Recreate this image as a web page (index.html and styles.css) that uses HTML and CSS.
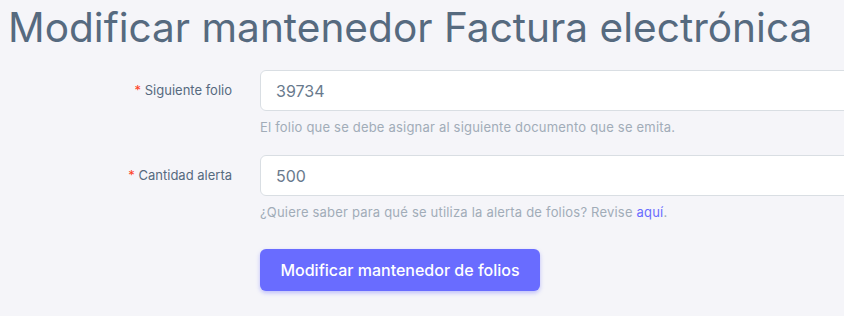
FILE: index.html
```html
<!DOCTYPE html>
<html lang="es">
<head>
<meta charset="utf-8">
<title>Modificar mantenedor Factura electrónica</title>
<link rel="stylesheet" href="styles.css">
</head>
<body>
<div class="page">
  <h1 class="title">Modificar mantenedor Factura electrónica</h1>
  <form class="form">
    <div class="row">
      <label class="label" for="folio"><span class="req">*</span> Siguiente folio</label>
      <div class="field">
        <div class="clip"><input class="input" id="folio" type="text" value="39734"></div>
        <div class="help">El folio que se debe asignar al siguiente documento que se emita.</div>
      </div>
    </div>
    <div class="row">
      <label class="label" for="alerta"><span class="req">*</span> Cantidad alerta</label>
      <div class="field">
        <div class="clip"><input class="input" id="alerta" type="text" value="500"></div>
        <div class="help">¿Quiere saber para qué se utiliza la alerta de folios? Revise <a class="link" href="#">aquí</a>.</div>
      </div>
    </div>
    <div class="row actions">
      <div></div>
      <div class="field">
        <button class="btn" type="button">Modificar mantenedor de folios</button>
      </div>
    </div>
  </form>
</div>
</body>
</html>
```
FILE: styles.css
```css
html, body {
  margin: 0;
  padding: 0;
}
body {
  background: #f5f5f9;
  font-family: "Inter", "Noto Sans", "Liberation Sans", sans-serif;
  color: #697a8d;
  overflow: hidden;
  width: 844px;
  height: 316px;
}
.page {
  padding-left: 8px;
}
.title {
  margin: 0;
  font-size: 40.6px;
  line-height: 56px;
  font-weight: 400;
  color: #566a7f;
  white-space: nowrap;
}
.form {
  margin-top: 14px;
  display: flex;
  flex-direction: column;
  gap: 18px;
}
.row {
  display: grid;
  grid-template-columns: 252px minmax(0, 1fr);
}
.actions {
  margin-top: 9px;
}
.label {
  text-align: right;
  padding-right: 28px;
  font-size: 13px;
  line-height: 40px;
  color: #566a7f;
  white-space: nowrap;
}
.req {
  color: #ff3e1d;
}
.field {
  display: flex;
  flex-direction: column;
  align-items: flex-start;
  min-width: 0;
}
.clip {
  align-self: stretch;
  overflow: hidden;
}
.input {
  display: block;
  box-sizing: border-box;
  width: 700px;
  height: 41px;
  border: 1px solid #d9dee3;
  border-radius: 6px;
  background: #fff;
  padding: 0 15px;
  font-family: inherit;
  font-size: 16px;
  color: #697a8d;
  outline: none;
}
.help {
  margin-top: 6px;
  font-size: 13px;
  line-height: 20px;
  letter-spacing: 0.2px;
  color: #a1acb8;
  white-space: nowrap;
}
.link {
  color: #696cff;
  text-decoration: none;
}
.btn {
  width: 280px;
  height: 42px;
  border: none;
  border-radius: 6px;
  background: #696cff;
  color: #fff;
  font-family: inherit;
  font-size: 16px;
  font-weight: 500;
  box-shadow: 0 2px 4px rgba(105, 108, 255, 0.4);
  cursor: pointer;
}
```
